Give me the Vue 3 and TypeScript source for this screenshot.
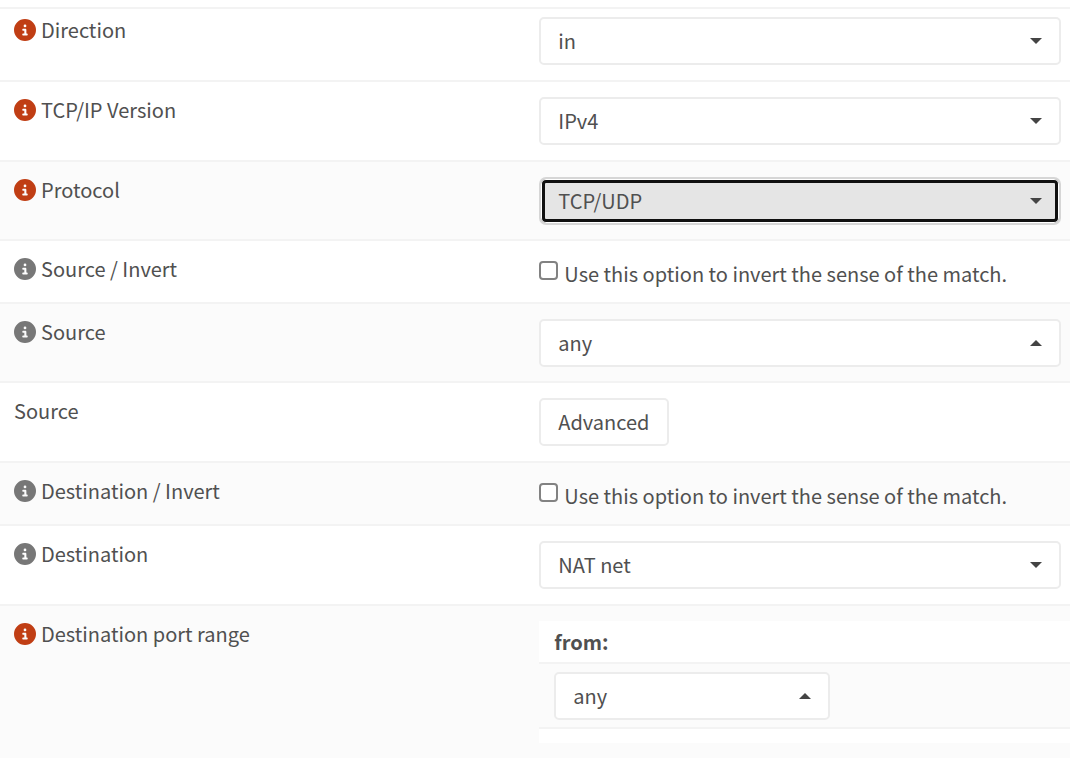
<script setup lang="ts">
import { ref } from 'vue'

type Kind = 'select' | 'check' | 'button' | 'range'

interface Row {
  id: string
  label: string
  kind: Kind
  icon?: 'red' | 'grey'
  options?: string[]
  up?: boolean
  striped?: boolean
  active?: boolean
}

const rows: Row[] = [
  { id: 'direction', label: 'Direction', kind: 'select', icon: 'red', options: ['in', 'out'] },
  { id: 'ipprotocol', label: 'TCP/IP Version', kind: 'select', icon: 'red', options: ['IPv4', 'IPv6', 'IPv4+IPv6'] },
  { id: 'protocol', label: 'Protocol', kind: 'select', icon: 'red', options: ['TCP/UDP', 'TCP', 'UDP', 'any'], striped: true, active: true },
  { id: 'src-invert', label: 'Source / Invert', kind: 'check', icon: 'grey' },
  { id: 'src', label: 'Source', kind: 'select', icon: 'grey', options: ['any', 'NAT net'], up: true, striped: true },
  { id: 'src-advanced', label: 'Source', kind: 'button' },
  { id: 'dst-invert', label: 'Destination / Invert', kind: 'check', icon: 'grey', striped: true },
  { id: 'dst', label: 'Destination', kind: 'select', icon: 'grey', options: ['NAT net', 'any'] },
  { id: 'dst-port', label: 'Destination port range', kind: 'range', icon: 'red', options: ['any', 'HTTP', 'HTTPS'], up: true, striped: true },
]

const values = ref<Record<string, string>>(
  Object.fromEntries(rows.filter((r) => r.options).map((r) => [r.id, r.options![0]])),
)
const checks = ref<Record<string, boolean>>({ 'src-invert': false, 'dst-invert': false })
</script>

<template>
  <form class="rule-form" @submit.prevent>
    <div v-for="row in rows" :key="row.id" class="row" :class="[row.kind, { striped: row.striped }]">
      <div class="name">
        <button v-if="row.icon" type="button" class="info" :class="row.icon" :aria-label="`Help: ${row.label}`">
          <svg viewBox="0 0 512 512" aria-hidden="true">
            <path
              d="M256 512A256 256 0 1 0 256 0a256 256 0 1 0 0 512zM216 336h24V272H216c-13.3 0-24-10.7-24-24s10.7-24 24-24h48c13.3 0 24 10.7 24 24v88h8c13.3 0 24 10.7 24 24s-10.7 24-24 24H216c-13.3 0-24-10.7-24-24s10.7-24 24-24zm40-208a32 32 0 1 1 0 64 32 32 0 1 1 0-64z"
            />
          </svg>
        </button>
        <label v-if="row.kind === 'select'" :for="row.id">{{ row.label }}</label>
        <span v-else>{{ row.label }}</span>
      </div>

      <div class="control">
        <div v-if="row.kind === 'select'" class="picker" :class="{ active: row.active }">
          <select :id="row.id" v-model="values[row.id]">
            <option v-for="o in row.options" :key="o">{{ o }}</option>
          </select>
          <svg class="caret" :class="{ up: row.up }" viewBox="0 0 12 6" aria-hidden="true"><path d="M0 0h12L6 6z" /></svg>
        </div>

        <label v-else-if="row.kind === 'check'" class="option">
          <input v-model="checks[row.id]" type="checkbox" />
          <span>Use this option to invert the sense of the match.</span>
        </label>

        <button v-else-if="row.kind === 'button'" type="button" class="btn">Advanced</button>

        <div v-else class="ports">
          <label class="ports-head" :for="row.id">from:</label>
          <div class="ports-body">
            <div class="picker small">
              <select :id="row.id" v-model="values[row.id]">
                <option v-for="o in row.options" :key="o">{{ o }}</option>
              </select>
              <svg class="caret up" viewBox="0 0 12 6" aria-hidden="true"><path d="M0 0h12L6 6z" /></svg>
            </div>
          </div>
          <div class="ports-foot"></div>
        </div>
      </div>
    </div>
  </form>
</template>

<style>
body {
  margin: 0;
  background: #fff;
}
</style>

<style scoped>
.rule-form {
  padding-top: 7px;
  color: #505050;
  font-family: 'Noto Sans CJK SC', 'Open Sans', sans-serif;
  font-size: 20px;
  line-height: 26px;
}
.row {
  display: grid;
  grid-template-columns: 49% 51%;
  border-top: 2px solid #f3f3f3;
  padding: 15px 0;
}
.row:first-child {
  padding-top: 8px;
}
.row.striped {
  background: #fbfbfb;
}
.row.select.striped {
  padding-bottom: 14px;
}
.name {
  display: flex;
  align-items: flex-start;
  gap: 5px;
  padding-left: 14px;
}
.info {
  flex: none;
  width: 22px;
  height: 22px;
  margin: 2px 0 0;
  padding: 0;
  border: 0;
  border-radius: 50%;
  background: none;
  cursor: pointer;
}
.info svg {
  display: block;
  width: 22px;
  height: 22px;
  fill: currentColor;
}
.info.red {
  color: #c03e14;
}
.info.grey {
  color: #777;
}
.control {
  padding: 0 9px 0 15px;
}
.range .control {
  padding-right: 0;
}
.picker {
  display: grid;
  align-items: center;
}
.picker > * {
  grid-area: 1 / 1;
}
select,
.btn {
  box-sizing: border-box;
  height: 48px;
  margin: 0;
  padding: 0 17px;
  border: 2px solid #ececec;
  border-radius: 5px;
  background: #fff;
  color: inherit;
  font: inherit;
  cursor: pointer;
}
select {
  appearance: none;
  width: 100%;
}
.btn {
  display: block;
}
.caret {
  justify-self: end;
  width: 12px;
  height: 6px;
  margin-right: 19px;
  fill: #444;
  pointer-events: none;
}
.caret.up {
  transform: rotate(180deg);
}
.active select {
  border-color: #d6d6d6;
  border-radius: 7px;
  background: #e5e5e5;
  box-shadow: inset 0 0 0 1px #fff, inset 0 0 0 4px #101010;
  outline: none;
}
.option {
  display: flex;
  align-items: flex-start;
  gap: 6px;
  padding-top: 5px;
}
.option input {
  appearance: none;
  box-sizing: border-box;
  flex: none;
  width: 19px;
  height: 19px;
  margin: 0;
  border: 2px solid #828282;
  border-radius: 4px;
  background: #fff;
}
.option input:checked {
  background: #555;
}
.ports-head {
  display: block;
  padding: 8px 15px 7px;
  background: #fff;
  font-weight: 700;
}
.ports-body {
  padding: 8px 15px 7px;
  border: solid #f3f3f3;
  border-width: 2px 0;
}
.small {
  max-width: 276px;
}
.ports-foot {
  height: 14px;
  background: #fff;
}
</style>
